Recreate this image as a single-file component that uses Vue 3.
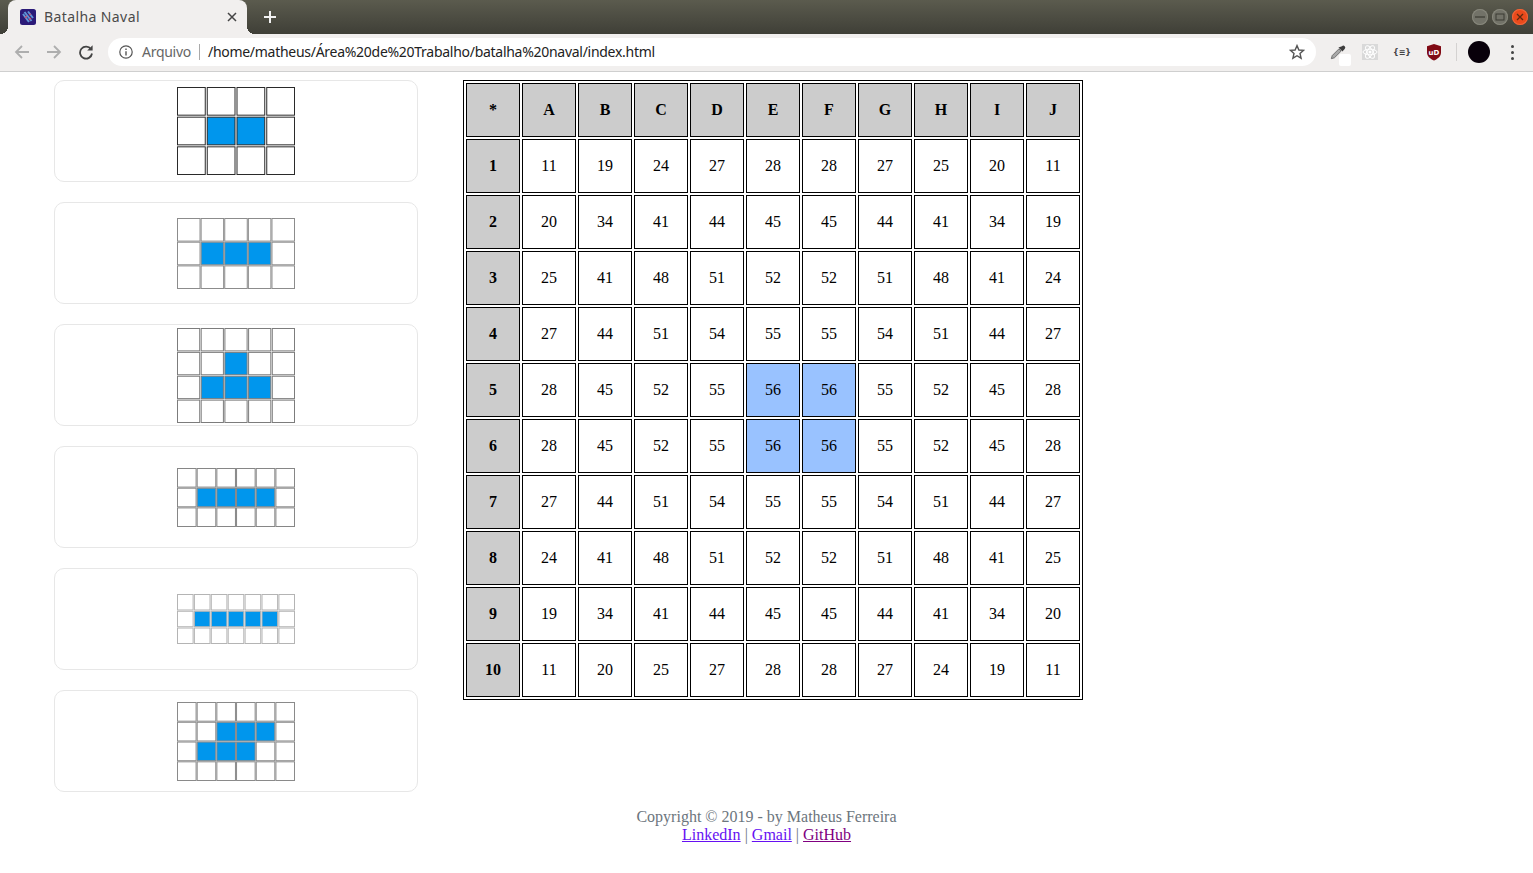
<script setup>
const ships = [
  { w: 118, h: 88, line: '#2a2a2a', stroke: 1, gap: 1, map: ['0000', '0110', '0000'] },
  { w: 118, h: 71, line: '#8c8c8c', stroke: 1, gap: 0.1, map: ['00000', '01110', '00000'] },
  { w: 118, h: 95, line: '#7c7c7c', stroke: 1, gap: 0.5, map: ['00000', '00100', '01110', '00000'] },
  { w: 118, h: 59, line: '#868686', stroke: 1, gap: 0.1, map: ['000000', '011110', '000000'] },
  { w: 118, h: 50, line: '#b4b4b4', stroke: 1, gap: 0.3, map: ['0000000', '0111110', '0000000'] },
  { w: 118, h: 79, line: '#8a8a8a', stroke: 1, gap: 0.1, map: ['000000', '001110', '011100', '000000'] },
]

function cells(ship) {
  const cols = ship.map[0].length
  const rows = ship.map.length
  const px = (ship.w + ship.gap) / cols
  const py = (ship.h + ship.gap) / rows
  const out = []
  ship.map.forEach((row, r) => {
    row.split('').forEach((c, i) => {
      out.push({
        key: r + '-' + i,
        x: i * px + ship.stroke / 2,
        y: r * py + ship.stroke / 2,
        w: px - ship.gap - ship.stroke,
        h: py - ship.gap - ship.stroke,
        on: c === '1',
      })
    })
  })
  return out
}

const columns = ['A', 'B', 'C', 'D', 'E', 'F', 'G', 'H', 'I', 'J']
const board = [
  [11, 19, 24, 27, 28, 28, 27, 25, 20, 11],
  [20, 34, 41, 44, 45, 45, 44, 41, 34, 19],
  [25, 41, 48, 51, 52, 52, 51, 48, 41, 24],
  [27, 44, 51, 54, 55, 55, 54, 51, 44, 27],
  [28, 45, 52, 55, 56, 56, 55, 52, 45, 28],
  [28, 45, 52, 55, 56, 56, 55, 52, 45, 28],
  [27, 44, 51, 54, 55, 55, 54, 51, 44, 27],
  [24, 41, 48, 51, 52, 52, 51, 48, 41, 25],
  [19, 34, 41, 44, 45, 45, 44, 41, 34, 20],
  [11, 20, 25, 27, 28, 28, 27, 24, 19, 11],
]
</script>

<template>
  <div class="browser">
    <div class="tabstrip">
      <div class="tab">
        <svg class="favicon" width="16" height="16" viewBox="0 0 16 16">
          <rect width="16" height="16" rx="2.5" fill="#2b1a78" />
          <path d="M3 5l6 8M4.500 3l7 9M8 2.500l5 6.500" stroke="#5f95d6" stroke-width="2" fill="none" />
          <path d="M5 9l2-2M9 6l2-1M9 11l2-2" stroke="#c8506e" stroke-width="1.3" fill="none" />
        </svg>
        <span class="tab-title">Batalha Naval</span>
        <svg class="tab-close" width="10" height="10" viewBox="0 0 10 10">
          <path d="M1 1l8 8M9 1l-8 8" stroke="#444" stroke-width="1.5" fill="none" />
        </svg>
      </div>
      <svg class="new-tab" width="12" height="12" viewBox="0 0 12 12">
        <path d="M6 0v12M0 6h12" stroke="#f1f1f1" stroke-width="2" fill="none" />
      </svg>
      <div class="win-buttons">
        <span class="win-btn">
          <svg width="10" height="10" viewBox="0 0 10 10"><path d="M0 5h10" stroke="#3b3b33" stroke-width="1.2" /></svg>
        </span>
        <span class="win-btn">
          <svg width="10" height="10" viewBox="0 0 10 10"><rect x="1" y="2" width="8" height="6" stroke="#3b3b33" fill="none" /></svg>
        </span>
        <span class="win-btn close">
          <svg width="10" height="10" viewBox="0 0 10 10"><path d="M2 2l6 6M8 2l-6 6" stroke="#5c2a10" stroke-width="1.3" /></svg>
        </span>
      </div>
    </div>

    <div class="toolbar">
      <svg class="nav" width="16" height="16" viewBox="0 0 16 16">
        <path d="M15 8H2M8 2L2 8l6 6" stroke="#aeaeae" stroke-width="1.8" fill="none" />
      </svg>
      <svg class="nav" width="16" height="16" viewBox="0 0 16 16">
        <path d="M1 8h13M8 2l6 6-6 6" stroke="#aeaeae" stroke-width="1.8" fill="none" />
      </svg>
      <svg class="nav" width="16" height="16" viewBox="0 0 16 16">
        <path d="M13 5.2A6 6 0 1 0 14 9.5" stroke="#444" stroke-width="1.8" fill="none" />
        <path d="M14.6 1.2v5.4H9.2z" fill="#444" />
      </svg>
      <div class="omnibox">
        <svg width="14" height="14" viewBox="0 0 14 14">
          <circle cx="7" cy="7" r="6.200" stroke="#555" stroke-width="1.2" fill="none" />
          <path d="M7 6.200v4.300M7 3.500v1.400" stroke="#555" stroke-width="1.4" />
        </svg>
        <span class="scheme">Arquivo</span>
        <span class="sep"></span>
        <span class="url">/home/matheus/Área%20de%20Trabalho/batalha%20naval/index.html</span>
        <svg class="star" width="16" height="16" viewBox="0 0 16 16">
          <path d="M8 1.600l1.900 4.400 4.700.4-3.600 3.100 1.100 4.700L8 11.700l-4.100 2.500L5 9.500 1.400 6.400l4.700-.4z" stroke="#555" stroke-width="1.400" fill="none" />
        </svg>
      </div>
      <div class="extensions">
        <span class="ext dropper">
          <svg width="18" height="18" viewBox="0 0 18 18">
            <path d="M1.500 16.500l1-3.500L10 5.500l2.500 2.500L5 15.500z" fill="#a8a8a8" stroke="#666" />
            <path d="M9.500 4l4.500 4.500 2.500-3a2.100 2.100 0 0 0-3-3z" fill="#3d3d3d" />
          </svg>
          <i class="dropper-chip"></i>
        </span>
        <span class="ext react">
          <svg width="16" height="16" viewBox="0 0 16 16">
            <rect width="16" height="16" fill="#d9d9d9" />
            <g fill="none" stroke="#fff" stroke-width="1">
              <ellipse cx="8" cy="8" rx="7" ry="2.800" />
              <ellipse cx="8" cy="8" rx="7" ry="2.800" transform="rotate(60 8 8)" />
              <ellipse cx="8" cy="8" rx="7" ry="2.800" transform="rotate(120 8 8)" />
            </g>
            <circle cx="8" cy="8" r="1.500" fill="#fff" />
          </svg>
        </span>
        <span class="ext json">{≡}</span>
        <span class="ext">
          <svg width="16" height="18" viewBox="0 0 16 18">
            <path d="M8 1l7 2.200v6.300C15 13.500 11.500 16 8 17.500 4.500 16 1 13.500 1 9.500V3.200z" fill="#800a14" />
            <text x="8" y="11.500" class="ubo-text" text-anchor="middle">uD</text>
          </svg>
        </span>
        <span class="tool-sep"></span>
        <span class="avatar"></span>
        <span class="menu"><i></i><i></i><i></i></span>
      </div>
    </div>

    <div class="page">
      <main class="content">
        <aside class="ships">
          <div v-for="(ship, n) in ships" :key="n" class="ship-card">
            <svg :width="ship.w" :height="ship.h" :viewBox="`0 0 ${ship.w} ${ship.h}`">
              <rect
                v-for="c in cells(ship)"
                :key="c.key"
                :x="c.x"
                :y="c.y"
                :width="c.w"
                :height="c.h"
                :fill="c.on ? '#0096ed' : '#fff'"
                :stroke="ship.line"
                :stroke-width="ship.stroke"
              />
            </svg>
          </div>
        </aside>

        <table class="board">
          <tbody>
            <tr>
              <th>*</th>
              <th v-for="col in columns" :key="col">{{ col }}</th>
            </tr>
            <tr v-for="(row, r) in board" :key="r">
              <th>{{ r + 1 }}</th>
              <td v-for="(val, c) in row" :key="c" :class="{ hot: val === 56 }">{{ val }}</td>
            </tr>
          </tbody>
        </table>
      </main>

      <footer class="footer">
        Copyright © 2019 - by Matheus Ferreira<br />
        <a href="#" class="link">LinkedIn</a> | <a href="#" class="link">Gmail</a> |
        <a href="#" class="link seen">GitHub</a>
      </footer>
    </div>
  </div>
</template>

<style>
html,
body {
  margin: 0;
  background: #fff;
}
</style>

<style scoped>
.browser {
  height: 873px;
  overflow: hidden;
  display: flex;
  flex-direction: column;
}

.tabstrip {
  height: 34px;
  flex: none;
  display: flex;
  align-items: center;
  background: linear-gradient(#5b5b4e, #3f3f37);
}

.tab {
  position: relative;
  width: 239px;
  height: 34px;
  margin-left: 8px;
  box-sizing: border-box;
  padding: 0 10px 0 12px;
  display: flex;
  align-items: center;
  background: #f1efee;
  border-radius: 8px 8px 0 0;
}

.tab::before,
.tab::after {
  content: '';
  position: absolute;
  bottom: 0;
  width: 8px;
  height: 8px;
}

.tab::before {
  left: -8px;
  background: radial-gradient(circle at 0 0, transparent 8px, #f1efee 8px);
}

.tab::after {
  right: -8px;
  background: radial-gradient(circle at 100% 0, transparent 8px, #f1efee 8px);
}

.favicon {
  flex: none;
}

.tab-title {
  margin-left: 8px;
  padding-bottom: 2px;
  flex: 1;
  font: 14px 'Noto Sans', sans-serif;
  letter-spacing: 0.4px;
  color: #4a4a4a;
}

.tab-close {
  flex: none;
}

.new-tab {
  margin-left: 17px;
}

.win-buttons {
  margin-left: auto;
  margin-right: 5px;
  display: flex;
  gap: 4px;
}

.win-btn {
  width: 16px;
  height: 16px;
  border-radius: 50%;
  display: flex;
  align-items: center;
  justify-content: center;
  background: #727268;
  box-shadow: inset 0 0 0 1px #88887c;
}

.win-btn.close {
  background: #ea4a1c;
  box-shadow: inset 0 0 0 1px #f0683c;
}

.toolbar {
  height: 36px;
  padding-bottom: 1px;
  flex: none;
  display: flex;
  align-items: center;
  background: #f1efee;
  border-bottom: 1px solid #cfcfcf;
  padding-left: 14px;
}

.nav {
  flex: none;
  margin-right: 16px;
}

.omnibox {
  width: 1208px;
  height: 28px;
  margin-left: -2px;
  box-sizing: border-box;
  padding: 0 10px 0 11px;
  flex: none;
  display: flex;
  align-items: center;
  background: #fff;
  border-radius: 14px;
  font: 14px 'Noto Sans', sans-serif;
}

.scheme {
  margin-left: 9px;
  padding-bottom: 2px;
  letter-spacing: -0.28px;
  color: #666;
}

.sep {
  width: 1px;
  height: 16px;
  margin: 0 8px;
  background: #aaa;
}

.url {
  padding-bottom: 2px;
  letter-spacing: -0.28px;
  color: #222;
}

.star {
  margin-left: auto;
  margin-right: 1px;
}

.extensions {
  flex: 1;
  display: flex;
  align-items: center;
  padding-left: 14px;
}

.ext {
  position: relative;
  width: 16px;
  height: 18px;
  margin-right: 16px;
  display: flex;
  align-items: center;
  justify-content: center;
}

.dropper-chip {
  position: absolute;
  left: 9px;
  top: 11px;
  width: 12px;
  height: 12px;
  border-radius: 2px;
  background: #fff;
}

.json {
  font: bold 8px 'DejaVu Sans', sans-serif;
  color: #444;
  white-space: nowrap;
}

.ubo-text {
  font: bold 7px 'DejaVu Sans', sans-serif;
  fill: #fff;
}

.tool-sep {
  width: 1px;
  height: 18px;
  margin-left: -2px;
  background: #d4d2d1;
}

.avatar {
  width: 22px;
  height: 22px;
  margin-left: 11px;
  border-radius: 50%;
  background: #08000a;
}

.menu {
  margin-left: 21px;
  display: flex;
  flex-direction: column;
  gap: 3px;
}

.menu i {
  width: 3px;
  height: 3px;
  border-radius: 50%;
  background: #444;
}

.page {
  flex: 1;
}

.content {
  display: flex;
  align-items: flex-start;
  gap: 45px;
  padding: 8px 0 0 54px;
}

.ships {
  width: 364px;
  flex: none;
  display: flex;
  flex-direction: column;
  gap: 20px;
}

.ship-card {
  height: 102px;
  box-sizing: border-box;
  display: flex;
  align-items: center;
  justify-content: center;
  border: 1px solid #e7e7e7;
  border-radius: 10px;
}

.ship-card svg {
  display: block;
}

.board {
  border: 1px solid #000;
  border-collapse: separate;
  border-spacing: 2px;
  font: 16px 'Liberation Serif', serif;
  color: #000;
}

.board th,
.board td {
  width: 52px;
  height: 52px;
  padding: 0;
  border: 1px solid #000;
  text-align: center;
}

.board th {
  background: #ccc;
  font-weight: bold;
}

.board td.hot {
  background: #99c2ff;
}

.footer {
  margin-top: 16px;
  text-align: center;
  font: 16px/18px 'Liberation Serif', serif;
  color: #6c757d;
}

.link {
  color: #6610f2;
}

.link.seen {
  color: #800080;
}
</style>
